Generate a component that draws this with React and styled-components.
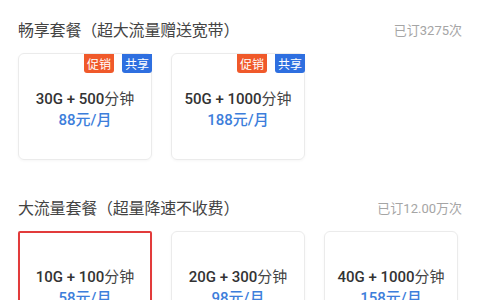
import styled, { createGlobalStyle } from "styled-components";

const GlobalStyle = createGlobalStyle`
  body {
    margin: 0;
    background: #fff;
    font-family: Roboto, "Noto Sans CJK SC", sans-serif;
  }
`;

const sections = [
  {
    title: "畅享套餐（超大流量赠送宽带）",
    count: "已订3275次",
    plans: [
      { data: "30G", mins: "500", price: "88", tags: true },
      { data: "50G", mins: "1000", price: "188", tags: true },
    ],
  },
  {
    title: "大流量套餐（超量降速不收费）",
    count: "已订12.00万次",
    plans: [
      { data: "10G", mins: "100", price: "58", selected: true },
      { data: "20G", mins: "300", price: "98" },
      { data: "40G", mins: "1000", price: "158" },
    ],
  },
];

const Page = styled.div`
  width: 480px;
  height: 300px;
  overflow: hidden;
  padding: 0 18px;
  box-sizing: border-box;
`;

const Section = styled.section`
  padding-top: ${(p) => (p.$first ? 17 : 35)}px;
`;

const Header = styled.div`
  display: flex;
  align-items: center;
  justify-content: space-between;
  height: 24px;
  margin-bottom: 12px;
`;

const Title = styled.h3`
  margin: 0;
  font-size: 16px;
  font-weight: 400;
  color: #444;
  letter-spacing: -0.2px;
`;

const Count = styled.span`
  font-size: 13px;
  color: #a5a5a5;
`;

const Grid = styled.div`
  display: grid;
  grid-template-columns: repeat(3, 134px);
  column-gap: 19px;
`;

const Card = styled.div`
  position: relative;
  height: 107px;
  box-sizing: border-box;
  border: ${(p) => (p.$selected ? "2px solid #e23b3b" : "1px solid #ebebeb")};
  border-radius: ${(p) => (p.$selected ? "2px" : "6px")};
  box-shadow: 0 1px 3px rgba(0, 0, 0, 0.04);
  display: flex;
  flex-direction: column;
  align-items: center;
  padding-top: ${(p) => (p.$selected ? 32 : 33)}px;
`;

const Tags = styled.div`
  position: absolute;
  top: 0;
  right: -1px;
  display: flex;
  gap: 8px;
`;

const Tag = styled.span`
  height: 19px;
  padding: 0 3px;
  border-radius: 0 0 3px 3px;
  font-size: 12px;
  line-height: 19px;
  color: #fff;
  background: ${(p) => (p.$blue ? "#2e6fe0" : "#f0592a")};
  font-family: "Noto Sans CJK SC", sans-serif;
`;

const Name = styled.div`
  font-size: 15px;
  line-height: 22px;
  color: #333;
`;

const Num = styled.span`
  font-weight: 500;
`;

const Unit = styled.span`
  font-family: "Noto Sans CJK SC", sans-serif;
  color: #444;
`;

const Price = styled.div`
  font-size: 15px;
  line-height: 20px;
  color: #3d7edb;
  font-weight: 500;
`;

export default function App() {
  return (
    <>
      <GlobalStyle />
      <Page>
        {sections.map((s, i) => (
          <Section key={s.title} $first={i === 0}>
            <Header>
              <Title>{s.title}</Title>
              <Count>{s.count}</Count>
            </Header>
            <Grid>
              {s.plans.map((p) => (
                <Card key={p.data} $selected={p.selected}>
                  {p.tags && (
                    <Tags>
                      <Tag>促销</Tag>
                      <Tag $blue>共享</Tag>
                    </Tags>
                  )}
                  <Name>
                    <Num>
                      {p.data} + {p.mins}
                    </Num>
                    <Unit>分钟</Unit>
                  </Name>
                  <Price>{p.price}元/月</Price>
                </Card>
              ))}
            </Grid>
          </Section>
        ))}
      </Page>
    </>
  );
}
